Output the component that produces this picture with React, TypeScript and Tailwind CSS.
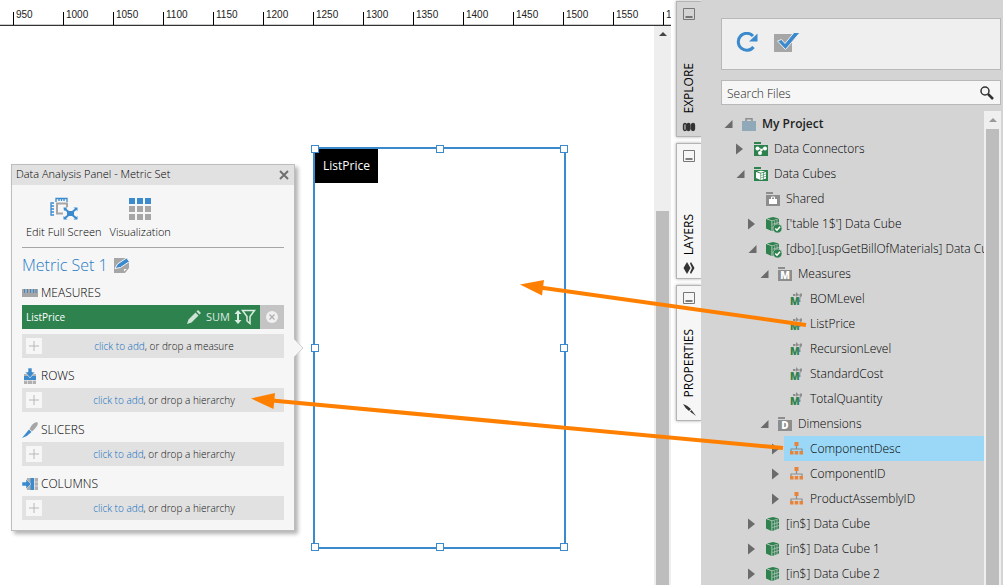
import type { ReactNode } from 'react';

const ticks = [950, 1000, 1050, 1100, 1150, 1200, 1250, 1300, 1350, 1400, 1450, 1500, 1550, 1600];

type IconName =
  | 'project' | 'connectors' | 'cubes' | 'shared' | 'cubeOk' | 'cube'
  | 'measures' | 'measure' | 'dimensions' | 'hierarchy';

interface Node {
  label: string;
  level: number;
  icon: IconName;
  state?: 'open' | 'closed';
  selected?: boolean;
}

const nodes: Node[] = [
  { label: 'My Project', level: 0, icon: 'project', state: 'open' },
  { label: 'Data Connectors', level: 1, icon: 'connectors', state: 'closed' },
  { label: 'Data Cubes', level: 1, icon: 'cubes', state: 'open' },
  { label: 'Shared', level: 2, icon: 'shared' },
  { label: "['table 1$'] Data Cube", level: 2, icon: 'cubeOk', state: 'closed' },
  { label: '[dbo].[uspGetBillOfMaterials] Data Cube', level: 2, icon: 'cubeOk', state: 'open' },
  { label: 'Measures', level: 3, icon: 'measures', state: 'open' },
  { label: 'BOMLevel', level: 4, icon: 'measure' },
  { label: 'ListPrice', level: 4, icon: 'measure' },
  { label: 'RecursionLevel', level: 4, icon: 'measure' },
  { label: 'StandardCost', level: 4, icon: 'measure' },
  { label: 'TotalQuantity', level: 4, icon: 'measure' },
  { label: 'Dimensions', level: 3, icon: 'dimensions', state: 'open' },
  { label: 'ComponentDesc', level: 4, icon: 'hierarchy', state: 'closed', selected: true },
  { label: 'ComponentID', level: 4, icon: 'hierarchy', state: 'closed' },
  { label: 'ProductAssemblyID', level: 4, icon: 'hierarchy', state: 'closed' },
  { label: '[in$] Data Cube', level: 2, icon: 'cube', state: 'closed' },
  { label: '[in$] Data Cube 1', level: 2, icon: 'cube', state: 'closed' },
  { label: '[in$] Data Cube 2', level: 2, icon: 'cube', state: 'closed' },
];

const indents = ['pl-0', 'pl-3', 'pl-6', 'pl-9', 'pl-12'];

function CubeShape() {
  return (
    <>
      <path d="M0 2L5.500 4V14L0 11.500Z" fill="#2e824e" />
      <path d="M1 1.500L7 0l6 1.500L6 3.500Z" fill="#2e824e" />
      <path d="M6.300 4L13 2V11.500L6.300 14Z" fill="#2e824e" />
      <path d="M6.300 7.300L13 5.300M6.300 10.500L13 8.500M8.700 3.500V13M11 3V12.500" stroke="#d4d4d4" strokeWidth="0.6" />
    </>
  );
}

function TreeIcon({ name }: { name: IconName }) {
  let art: ReactNode;
  switch (name) {
    case 'project':
      art = (
        <>
          <path d="M4 5V1.700H10V5" fill="none" stroke="#8d8d8d" strokeWidth="1.500" />
          <path d="M0 4H14V14H0Z" fill="#8fa9b8" />
        </>
      );
      break;
    case 'connectors':
      art = (
        <>
          <path d="M0 0H7V2H0ZM0 3H14V14H0Z" fill="#2e824e" />
          <path d="M3.500 6L7.500 7.500L11 6M7.500 7.500L6 11" stroke="#fff" strokeWidth="1" fill="none" />
          <circle cx="3.500" cy="6.500" r="2" fill="#fff" />
          <circle cx="11" cy="6.500" r="2" fill="#fff" />
          <circle cx="6" cy="11" r="2" fill="#fff" />
          <circle cx="7.500" cy="8" r="1.200" fill="#fff" />
        </>
      );
      break;
    case 'cubes':
      art = (
        <>
          <path d="M0 0H7V2H0ZM0 3H14V14H0Z" fill="#2e824e" />
          <path d="M2 5L6.500 6.500V13L2 11ZM7 6.500L12 5V11.500L7 13ZM3 4.500L7 3.800L11 4.500L7 5.700Z" fill="#fff" />
          <path d="M7 8.500L12 7M7 10.800L12 9.300M9.500 5V13" stroke="#2e824e" strokeWidth="0.6" />
        </>
      );
      break;
    case 'shared':
      art = (
        <>
          <path d="M0 0H7V2H0ZM0 3H14V14H0Z" fill="#8d8d8d" />
          <path d="M5.500 7V5H8.500V7" stroke="#fff" fill="none" />
          <path d="M3 7H11V12H3Z" fill="#fff" />
        </>
      );
      break;
    case 'cube':
      art = <CubeShape />;
      break;
    case 'cubeOk':
      art = (
        <>
          <CubeShape />
          <circle cx="11.500" cy="11.500" r="4.500" fill="#2e824e" stroke="#d4d4d4" strokeWidth="0.6" />
          <path d="M9.300 11.500L11 13.200L14 9.800" stroke="#fff" strokeWidth="1.500" fill="none" />
        </>
      );
      break;
    case 'measures':
    case 'dimensions':
      art = (
        <>
          <path d="M0 0H7V2H0ZM0 3H14V14H0Z" fill="#8d8d8d" />
          <text x="7" y="12" textAnchor="middle" fill="#fff" className="text-[10px] font-extrabold">
            {name === 'measures' ? 'M' : 'D'}
          </text>
        </>
      );
      break;
    case 'measure':
      art = (
        <>
          <path d="M4 3H11M10.500 3L9.500 9" stroke="#8d8d8d" fill="none" />
          <path d="M3 2H5V4H3ZM10 1.500H12V4.500H10ZM9 8H10.500V10H9ZM6 0L8.500 2.500L6 5Z" fill="#8d8d8d" />
          <text x="0" y="13" fill="#2e824e" className="text-[10px] font-extrabold">
            M
          </text>
        </>
      );
      break;
    case 'hierarchy':
      art = (
        <>
          <path d="M6.500 4V7M1 9V7H12V9" stroke="#8d8d8d" strokeWidth="1.200" fill="none" />
          <path d="M4.500 0H8.500V4H4.500ZM0 9H3.500V12.500H0ZM4.700 9H8.200V12.500H4.700ZM9.500 9H13V12.500H9.500Z" fill="#e8833a" />
        </>
      );
  }
  return <svg className="h-4 w-4 shrink-0 overflow-visible" viewBox="0 -1 16 16">{art}</svg>;
}

function TreeRow({ node }: { node: Node }) {
  return (
    <li className={`flex h-[25px] items-center ${indents[node.level]}`}>
      <span className="w-[15px] shrink-0 pl-[3px]">
        {node.state && (
          <svg className="h-3 w-2.5" viewBox="0 0 10 12">
            <path d={node.state === 'open' ? 'M8.500 2V10H0.500Z' : 'M0 0.500L7 6L0 11.500Z'} fill="#6b6b6b" />
          </svg>
        )}
      </span>
      <a
        href="#"
        className={`flex h-full min-w-0 flex-1 items-center gap-1 overflow-hidden pl-1.5 whitespace-nowrap ${
          node.selected ? 'bg-[#9bd8f7]' : ''
        } ${node.level === 0 ? 'font-semibold text-[#222]' : ''}`}
      >
        <TreeIcon name={node.icon} />
        {node.label}
      </a>
    </li>
  );
}

function SideTab({ label, active, children }: { label: string; active?: boolean; children: ReactNode }) {
  return (
    <button
      className={`flex h-[136px] w-[25px] flex-col items-center border border-r-0 border-[#b4b4b4] pt-1.5 pb-px shadow-[0_0_3px_#aaa] ${
        active ? 'bg-[#d4d4d4]' : 'bg-[#f6f6f6]'
      }`}
    >
      <svg className="h-3 w-3 shrink-0" viewBox="0 0 12 12">
        <path d="M0.500 0.500H11.500V11.500H0.500Z" fill="none" stroke="#777" />
        <path d="M2.500 9H9.500" stroke="#555" strokeWidth="1.500" />
      </svg>
      <span className="mt-auto mb-1.5 rotate-180 text-[12px] leading-4 font-normal [writing-mode:vertical-rl]">{label}</span>
      <svg className="h-4 w-4 shrink-0" viewBox="0 0 16 16">{children}</svg>
    </button>
  );
}

function DropRow({ kind }: { kind: string }) {
  return (
    <div className="flex h-6 items-center bg-[#e1e1e1] px-1">
      <button aria-label={`Add ${kind}`} className="flex h-4 w-4 items-center justify-center bg-[#f6f6f6]">
        <svg className="h-2.5 w-2.5" viewBox="0 0 10 10">
          <path d="M5 0V10M0 5H10" stroke="#b8b8b8" />
        </svg>
      </button>
      <p className="flex-1 pl-1.5 text-center text-[10px] text-[#111]">
        <a href="#" className="text-[#0f6cbd]">click to add</a>, or drop a {kind}
      </p>
    </div>
  );
}

function SectionTitle({ label, children }: { label: string; children: ReactNode }) {
  return (
    <h3 className="mt-1.5 flex h-6 items-center gap-[3px] text-[12px]">
      <svg className="h-4 w-4" viewBox="0 0 16 16">{children}</svg>
      {label}
    </h3>
  );
}

function AnalysisPanel() {
  return (
    <section className="absolute top-[138px] left-[11px] w-[284px] border border-[#bdbdbd] bg-[#f6f6f6] pb-2.5 shadow-[3px_3px_4px_rgba(0,0,0,0.3)]">
      <header className="flex h-5 items-center justify-between bg-[#e1e1e1] px-1 text-[11px]">
        <h2 className="pb-0.5 leading-4">Data Analysis Panel - Metric Set</h2>
        <button aria-label="Close">
          <svg className="h-3 w-3" viewBox="0 0 12 12">
            <path d="M2 2L10 10M10 2L2 10" stroke="#707070" strokeWidth="2" />
          </svg>
        </button>
      </header>
      <div className="px-2.5">
        <div className="flex gap-2 border-b border-[#a6a6a6] px-1 pt-3 pb-1 text-[11px]">
          <button className="flex flex-col items-center">
            <svg className="h-6 w-7" viewBox="0 0 28 24">
              <path d="M6 5V1.500H17V5M9 1.500V4M11.500 1.500V4M14 1.500V4M4 6H1V18H4M1 9H4M1 12H4M1 15H4" stroke="#3b8acd" strokeWidth="1.300" fill="none" />
              <path d="M13 16.500H7V6.500H17V10" stroke="#a6a6a6" strokeWidth="2" fill="none" />
              <path d="M15 12L26 21M26 12L15 21" stroke="#3b8acd" strokeWidth="2" />
              <path d="M17 14H24V19H17ZM13.500 10.500H17.500L14 14ZM27.500 10.500V14L23.500 10.500ZM13.500 22.500V19L17.500 22.500ZM27.500 22.500H23.500L27.500 19Z" fill="#3b8acd" />
            </svg>
            <span className="leading-[22px]">Edit Full Screen</span>
          </button>
          <button className="flex flex-col items-center">
            <svg className="h-6 w-6" viewBox="0 0 24 24">
              <path d="M1 1H7V7H1ZM9 1H15V7H9ZM17 1H23V7H17Z" fill="#3b8acd" />
              <path d="M1 9H7V15H1ZM9 9H15V15H9ZM17 9H23V15H17ZM1 17H7V23H1ZM9 17H15V23H9ZM17 17H23V23H17Z" fill="#a6a6a6" />
            </svg>
            <span className="leading-[22px]">Visualization</span>
          </button>
        </div>
        <div className="mt-1.5 flex h-[21px] items-center gap-1.5 text-[16px] text-[#2a7cc4]">
          Metric Set 1
          <button aria-label="Rename">
            <svg className="h-4 w-4" viewBox="0 0 16 16">
              <path d="M0 1H13L15 5V11L11 16H0Z" fill="#a6a6a6" />
              <path d="M9.500 15.500V11.500H14Z" fill="#f6f6f6" stroke="#a6a6a6" />
              <path d="M1 11.500L3.500 7L12.500 1L15.500 4.500L6.500 10.500Z" fill="#3b8acd" stroke="#f6f6f6" />
            </svg>
          </button>
        </div>

        <SectionTitle label="MEASURES">
          <path d="M0 4H16V12H0Z" fill="#a6a6a6" />
          <path d="M2.500 4V8M5.500 4V8M8.500 4V8M11.500 4V8M14 4V8" stroke="#3b8acd" />
        </SectionTitle>
        <div className="mb-[5px] flex h-6 bg-[#c4c4c4] text-white">
          <div className="flex flex-1 items-center gap-1 bg-[#2e824e] px-1 text-[10px] font-medium">
            ListPrice
            <button aria-label="Edit measure" className="ml-auto">
              <svg className="h-4 w-4" viewBox="0 0 16 16">
                <path d="M1 15L2.500 10.500L9.500 3.500L12.500 6.500L5.500 13.500ZM10.500 2.500L12 1L15 4L13.500 5.500Z" fill="#cfe3d6" />
              </svg>
            </button>
            <button className="text-[11px] font-normal text-[#dcebe1]">SUM</button>
            <button aria-label="Sort and filter">
              <svg className="h-4 w-[22px]" viewBox="0 0 22 16">
                <path d="M4 3V13" stroke="#dcebe1" strokeWidth="2" />
                <path d="M4 1L7.500 5H0.500ZM4 15L0.500 11H7.500Z" fill="#dcebe1" />
                <path d="M8.500 1.500H20.500L16 7.500V14.500L13 12V7.500Z" stroke="#dcebe1" strokeWidth="1.500" fill="none" />
              </svg>
            </button>
          </div>
          <button aria-label="Remove measure" className="flex w-6 items-center justify-center">
            <svg className="h-3 w-3" viewBox="0 0 12 12">
              <circle cx="6" cy="6" r="6" fill="#f0f0f0" />
              <path d="M3.500 3.500L8.500 8.500M8.500 3.500L3.500 8.500" stroke="#b0b0b0" strokeWidth="1.300" />
            </svg>
          </button>
        </div>
        <DropRow kind="measure" />

        <SectionTitle label="ROWS">
          <path d="M2 6H14V16H2Z" fill="#b0b0b0" />
          <path d="M2 8H14V12H2Z" fill="#3b8acd" />
          <path d="M6 0H10V4H13L8 10L3 4H6Z" fill="#3b8acd" stroke="#f6f6f6" strokeWidth="0.6" />
          <path d="M5.500 12V16M10.500 12V16M2 12.500H14" stroke="#f6f6f6" strokeWidth="0.6" />
        </SectionTitle>
        <DropRow kind="hierarchy" />

        <SectionTitle label="SLICERS">
          <path d="M0 16L7 7.500L9.500 10Q6 14 0 16Z" fill="#3b8acd" />
          <path d="M7.500 7Q10 1 15 0Q16.500 1 15 4Q13 7 10 9.500Z" fill="#a6a6a6" />
        </SectionTitle>
        <DropRow kind="hierarchy" />

        <SectionTitle label="COLUMNS">
          <path d="M5 2H16V14H5Z" fill="#b0b0b0" />
          <path d="M8.500 2H12V14H8.500Z" fill="#3b8acd" />
          <path d="M0 6H4V3L9 8L4 13V10H0Z" fill="#3b8acd" stroke="#f6f6f6" strokeWidth="0.5" />
          <path d="M12.500 2V14M12 6H16M12 10H16" stroke="#f6f6f6" strokeWidth="0.6" />
        </SectionTitle>
        <DropRow kind="hierarchy" />
      </div>
      <svg className="absolute top-[173px] -right-[10px] h-5 w-2.5" viewBox="0 0 10 20">
        <path d="M0 1L9 10L0 19Z" fill="#f6f6f6" />
        <path d="M0 1L9 10L0 19" fill="none" stroke="#d0d0d0" />
      </svg>
    </section>
  );
}

const handles = [
  '-top-1 -left-1',
  '-top-1 left-1/2 -ml-1',
  '-top-1 -right-1',
  'top-1/2 -mt-1 -left-1',
  'top-1/2 -mt-1 -right-1',
  '-bottom-1 -left-1',
  '-bottom-1 left-1/2 -ml-1',
  '-bottom-1 -right-1',
];

export default function App() {
  return (
    <div className="relative flex h-screen overflow-hidden bg-white font-['Open_Sans',sans-serif] text-[12px] font-light text-black">
      {/* Canvas */}
      <main className="flex min-w-0 flex-1 flex-col">
        <div className="flex h-[26px] shrink-0 items-end overflow-hidden border-b border-[#333] pl-[13px] font-['Liberation_Sans',sans-serif] text-[10px] text-[#222] shadow-[inset_0_-1px_0_#ccc]">
          {ticks.map((t) => (
            <span key={t} className="h-[13px] w-[50px] shrink-0 border-l border-black pl-0.5 leading-[5px]">
              {t}
            </span>
          ))}
        </div>
        <div className="flex min-h-0 flex-1">
          <div className="relative flex-1">
            <AnalysisPanel />
            <div className="absolute top-[121px] left-[313px] h-[402px] w-[253px] border-2 border-[#3b8acd]">
              <span className="flex h-[34px] w-[63px] items-center justify-center bg-black text-[12px] font-normal text-white">
                ListPrice
              </span>
              {handles.map((pos) => (
                <span key={pos} className={`absolute h-2 w-2 border border-[#3b8acd] bg-white ${pos}`} />
              ))}
            </div>
          </div>
          <div className="flex w-[17px] flex-col items-center bg-[#eee]">
            <svg className="mt-1 h-2 w-2" viewBox="0 0 8 8">
              <path d="M4 2L8 6H0Z" fill="#444" />
            </svg>
            <div className="mt-[173px] w-[13px] flex-1 bg-[#bdbdbd]" />
          </div>
        </div>
      </main>

      {/* Side tabs */}
      <nav className="flex w-[30px] shrink-0 flex-col items-end gap-1.5 pt-px">
        <SideTab label="EXPLORE" active>
          <rect x="2.500" y="4.500" width="3" height="7" rx="1.500" fill="#999" stroke="#333" strokeWidth="1.300" />
          <rect x="6" y="4.500" width="3" height="7" rx="1.500" fill="#333" stroke="#333" strokeWidth="1.300" />
          <rect x="10.500" y="4.500" width="3" height="7" rx="1.500" fill="#333" stroke="#333" strokeWidth="1.300" />
        </SideTab>
        <SideTab label="LAYERS">
          <path d="M6 1L9.500 7L6 13L2.500 7Z" fill="#333" />
          <path d="M10 1L13.500 7L10 13L9 11.500L11 7L9 2.500Z" fill="#333" />
        </SideTab>
        <SideTab label="PROPERTIES">
          <path d="M2 1Q6 2 10 6L8 8Q4 5 2 1ZM9 8.500L10.500 7L15 13Z" fill="#333" />
        </SideTab>
      </nav>

      {/* Explorer */}
      <aside className="flex w-[302px] shrink-0 flex-col bg-[#d4d4d4] pt-[18px] pr-0.5 pl-5">
        <div className="flex h-[52px] shrink-0 items-center gap-[15px] border border-[#b8b8b8] bg-[#efefef] px-[13px]">
          <button aria-label="Refresh">
            <svg className="h-6 w-6" viewBox="0 2 24 24">
              <path d="M18 6A8.500 8.500 0 1 0 18.500 17" fill="none" stroke="#3b8acd" strokeWidth="3" />
              <path d="M22.500 3.500V11.500H14Z" fill="#3b8acd" />
            </svg>
          </button>
          <button aria-label="Check in">
            <svg className="h-6 w-[26px]" viewBox="0 2 26 24">
              <path d="M0 4H18V22H0Z" fill="#a6a6a6" />
              <path d="M3.500 11L7.500 9.500L11 13.500L20 2.500H26L11.500 19.500Z" fill="#3b8acd" stroke="#efefef" />
            </svg>
          </button>
        </div>
        <label className="mt-2.5 flex h-[25px] shrink-0 items-center border border-[#b8b8b8] bg-[#f6f6f6] pr-1.5 pl-[5px]">
          <input type="text" aria-label="Search Files" placeholder="Search Files" className="min-w-0 flex-1 bg-transparent pt-0.5 text-[12px] outline-none placeholder:text-[#222]" />
          <svg className="h-3.5 w-3.5" viewBox="0 0 14 14">
            <circle cx="5" cy="5" r="4" fill="none" stroke="#333" strokeWidth="1.500" />
            <path d="M8 8L13 13" stroke="#333" strokeWidth="2.500" />
          </svg>
        </label>
        <div className="mt-1.5 flex min-h-0 flex-1">
          <ul className="min-w-0 flex-1 overflow-hidden">
            {nodes.map((node) => (
              <TreeRow key={node.label} node={node} />
            ))}
          </ul>
          <div className="flex w-[17px] shrink-0 flex-col items-center bg-[#efefef]">
            <svg className="my-[5px] h-2 w-2" viewBox="0 0 8 8">
              <path d="M4 2L8 6H0Z" fill="#999" />
            </svg>
            <div className="w-[13px] flex-1 bg-[#bdbdbd]" />
          </div>
        </div>
      </aside>

      {/* Drag arrows */}
      <svg className="pointer-events-none absolute top-0 left-0" width="1003" height="585" viewBox="0 0 1003 585">
        <path d="M806 325L540 287.500M783 448L272 400.500" stroke="#ff8000" strokeWidth="4" />
        <path d="M520 284.500L544 280L542 295.500ZM251 398.500L275 393L273.500 409Z" fill="#ff8000" />
      </svg>
    </div>
  );
}
